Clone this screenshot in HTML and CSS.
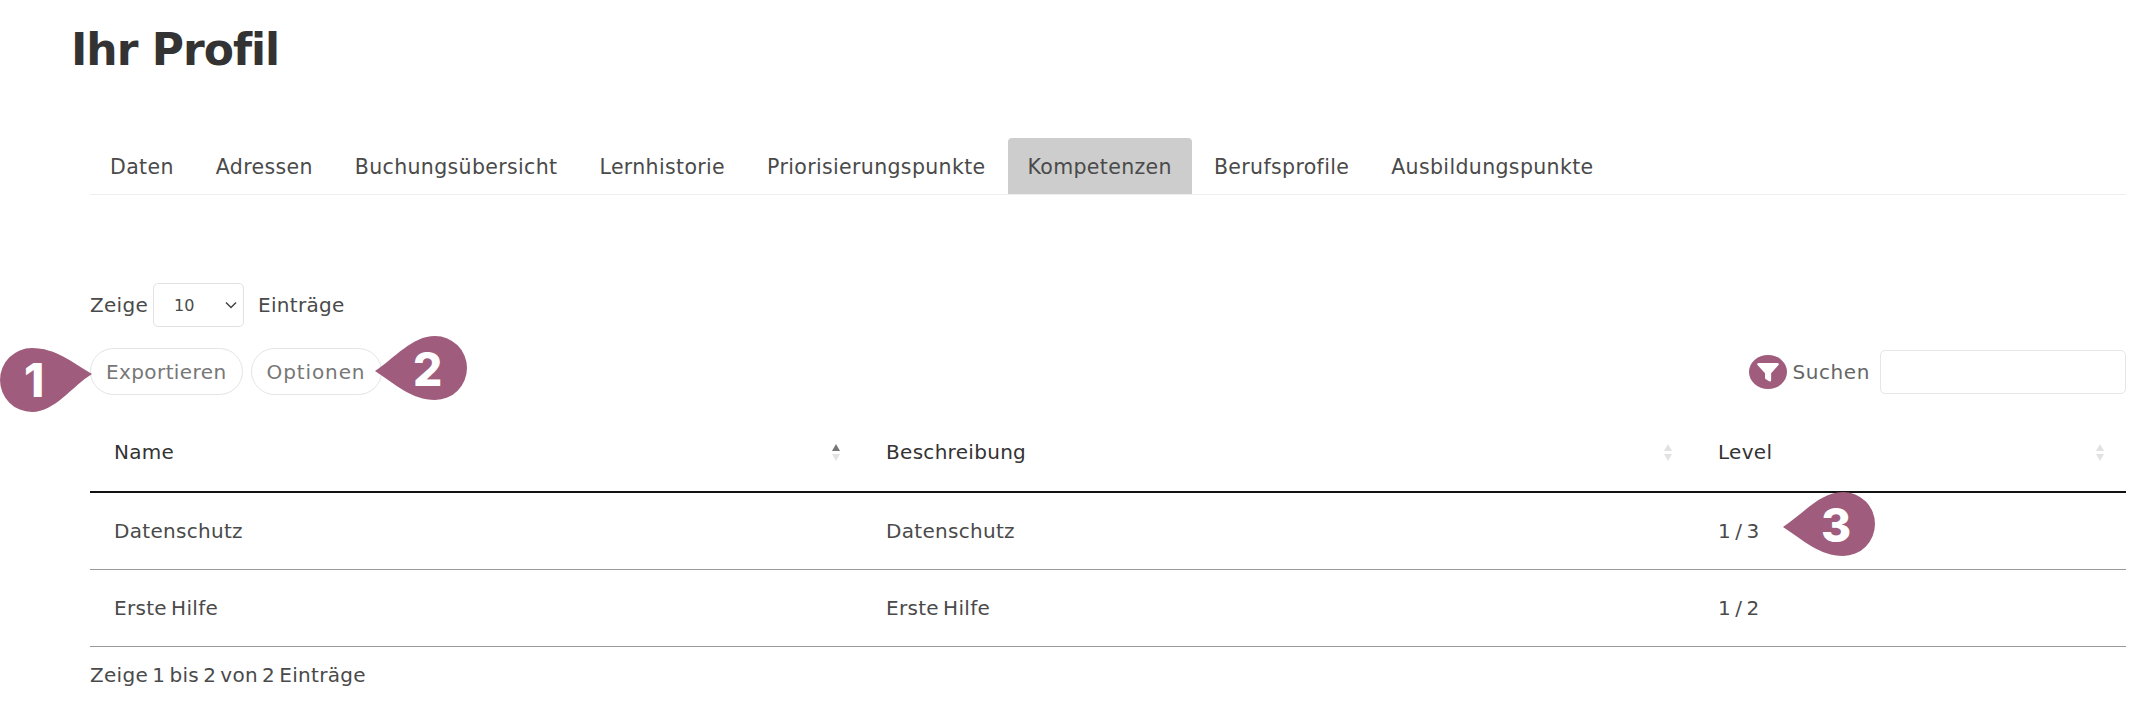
FILE: index.html
```html
<!DOCTYPE html>
<html lang="de">
<head>
    <meta charset="UTF-8">
    <meta name="viewport" content="width=device-width, initial-scale=1.0">
    <title>Ihr Profil</title>
    <link rel="stylesheet" href="styles.css">
</head>
<body>
    <h1 class="page-title">Ihr Profil</h1>
    <div class="container">
        <ul class="tabs">
            <li class="tab">Daten</li>
            <li class="tab">Adressen</li>
            <li class="tab">Buchungsübersicht</li>
            <li class="tab">Lernhistorie</li>
            <li class="tab">Priorisierungspunkte</li>
            <li class="tab active">Kompetenzen</li>
            <li class="tab">Berufsprofile</li>
            <li class="tab">Ausbildungspunkte</li>
        </ul>

        <div class="length-row">
            <span>Zeige</span>
            <div class="select-box">
                <span>10</span>
                <svg class="chevron" viewBox="0 0 12 8" width="12" height="8"><path d="M1 1.5l5 5 5-5" fill="none" stroke="#444" stroke-width="1.5"/></svg>
            </div>
            <span class="length-after">Einträge</span>
        </div>

        <div class="toolbar">
            <div class="buttons">
                <button class="pill">Exportieren</button>
                <button class="pill">Optionen</button>
                <div class="marker marker-left">
                    <svg viewBox="0 0 92 64" width="92" height="64"><path class="drop" d="M92 26C72 38 55 64 32 64A32 32 0 0 1 32 0C55 0 72 14 92 26Z"/></svg>
                    <span class="marker-num num-1">1</span>
                </div>
                <div class="marker marker-right">
                    <svg viewBox="0 0 92 64" width="92" height="64"><path class="drop" d="M0 35C20 22 37 0 60 0A32 32 0 0 1 60 64C37 64 20 48 0 35Z"/></svg>
                    <span class="marker-num num-2">2</span>
                </div>
            </div>
            <div class="search">
                <span class="filter-icon">
                    <svg viewBox="0 0 20 20" width="26" height="26"><path d="M2.6 3h14.8a1 1 0 0 1 .7 1.6L12.4 11v5.4a1 1 0 0 1-1.5.8l-2.6-1.7a1 1 0 0 1-.6-.8V11L1.9 4.6A1 1 0 0 1 2.6 3Z" fill="#fff"/></svg>
                </span>
                <span class="search-label">Suchen</span>
                <div class="search-input"></div>
            </div>
        </div>

        <table class="data-table">
            <thead>
                <tr>
                    <th class="col-name"><div class="th-inner">Name<span class="sort"><i class="up dark"></i><i class="down"></i></span></div></th>
                    <th class="col-desc"><div class="th-inner">Beschreibung<span class="sort"><i class="up"></i><i class="down"></i></span></div></th>
                    <th class="col-level"><div class="th-inner">Level<span class="sort"><i class="up"></i><i class="down"></i></span></div></th>
                </tr>
            </thead>
            <tbody>
                <tr>
                    <td>Datenschutz</td>
                    <td>Datenschutz</td>
                    <td class="level-cell">1 / 3
                        <div class="marker marker-level">
                            <svg viewBox="0 0 92 64" width="92" height="64"><path class="drop" d="M0 35C20 22 37 0 60 0A32 32 0 0 1 60 64C37 64 20 48 0 35Z"/></svg>
                            <span class="marker-num num-2">3</span>
                        </div>
                    </td>
                </tr>
                <tr>
                    <td>Erste Hilfe</td>
                    <td>Erste Hilfe</td>
                    <td>1 / 2</td>
                </tr>
            </tbody>
        </table>

        <div class="table-info">Zeige 1 bis 2 von 2 Einträge</div>
    </div>
</body>
</html>
```

FILE: styles.css
```css
body {
    margin: 0;
    font-family: "DejaVu Sans", "Noto Sans", sans-serif;
    font-size: 20px;
    letter-spacing: 0.3px;
    word-spacing: -2.5px;
    color: #4a4a4a;
    background: #fff;
    overflow: hidden;
}
.page-title {
    margin: 0;
    padding: 22px 0 0 71px;
    font-size: 44px;
    line-height: 56px;
    font-weight: 700;
    letter-spacing: -1px;
    word-spacing: 0;
    color: #333;
}
.container {
    padding: 60px 25px 0 90px;
}
.tabs {
    display: flex;
    list-style: none;
    margin: 0;
    padding: 0;
    height: 56px;
    border-bottom: 1px solid #eee;
}
.tab {
    padding: 0 20px;
    margin-right: 2px;
    font-size: 20.5px;
    letter-spacing: 0.35px;
    line-height: 58px;
    white-space: nowrap;
}
.tab.active {
    background-color: #cdcdcd;
    border-radius: 4px 4px 0 0;
}
.length-row {
    display: flex;
    align-items: center;
    margin-top: 88px;
    height: 44px;
}
.select-box {
    display: flex;
    align-items: center;
    justify-content: space-between;
    box-sizing: border-box;
    width: 91px;
    height: 44px;
    margin-left: 5px;
    padding: 0 6px 0 20px;
    border: 1px solid #e2e2e2;
    border-radius: 5px;
    font-size: 16px;
    letter-spacing: 0;
}
.length-after {
    margin-left: 14px;
}
.toolbar {
    display: flex;
    justify-content: space-between;
    align-items: center;
    margin-top: 21px;
    height: 47px;
}
.buttons {
    position: relative;
    display: flex;
    gap: 8px;
}
.pill {
    height: 47px;
    padding: 0 15px;
    background: #fff;
    border: 1px solid #e4e4e4;
    border-radius: 24px;
    font-family: inherit;
    font-size: 20px;
    letter-spacing: 0.4px;
    color: #777;
}
.pill + .pill {
    padding-right: 16px;
    letter-spacing: 0.9px;
}
.search {
    display: flex;
    align-items: center;
    color: #666;
}
.search-label {
    letter-spacing: 0.6px;
}
.filter-icon {
    display: flex;
    align-items: center;
    justify-content: center;
    width: 38px;
    height: 34px;
    margin-right: 5px;
    background-color: #9f5c7c;
    border-radius: 50%;
}
.search-input {
    box-sizing: border-box;
    width: 246px;
    height: 44px;
    margin-left: 10px;
    border: 1px solid #e6e6e6;
    border-radius: 5px;
}
.data-table {
    width: 100%;
    margin-top: 18px;
    border-collapse: collapse;
    table-layout: fixed;
}
.data-table th {
    height: 78px;
    padding: 0 24px;
    border-bottom: 2px solid #111;
    text-align: left;
    font-weight: 400;
    color: #333;
}
.col-name {
    width: 724px;
}
.col-desc {
    width: 784px;
}
.th-inner {
    display: flex;
    justify-content: space-between;
    align-items: center;
}
.data-table td {
    height: 76px;
    padding: 0 24px;
    border-bottom: 1px solid #999;
}
.sort {
    display: flex;
    flex-direction: column;
    gap: 3px;
    margin-right: -2px;
}
.sort i {
    display: block;
    width: 0;
    height: 0;
    border-left: 4px solid transparent;
    border-right: 4px solid transparent;
}
.sort .up {
    border-bottom: 7px solid #e2e2e2;
}
.sort .down {
    border-top: 7px solid #e2e2e2;
}
.sort .up.dark {
    border-bottom-color: #777;
}
.level-cell {
    position: relative;
}
.table-info {
    margin-top: 15px;
    line-height: 26px;
}
.marker {
    position: absolute;
    width: 92px;
    height: 64px;
}
.marker svg {
    display: block;
}
.drop {
    fill: #9f5c7c;
}
.marker-num {
    position: absolute;
    top: 0;
    font-family: "Inter", sans-serif;
    line-height: 64px;
    font-size: 46px;
    font-weight: 800;
    letter-spacing: 0;
    color: #fff;
}
.marker-left {
    left: -90px;
    top: 0;
}
.num-1 {
    left: 24px;
    top: 0;
}
.marker-right {
    left: 285px;
    top: -12px;
}
.num-2 {
    left: 38px;
    top: 1px;
}
.marker-level {
    left: 89px;
    top: -1px;
}
```
